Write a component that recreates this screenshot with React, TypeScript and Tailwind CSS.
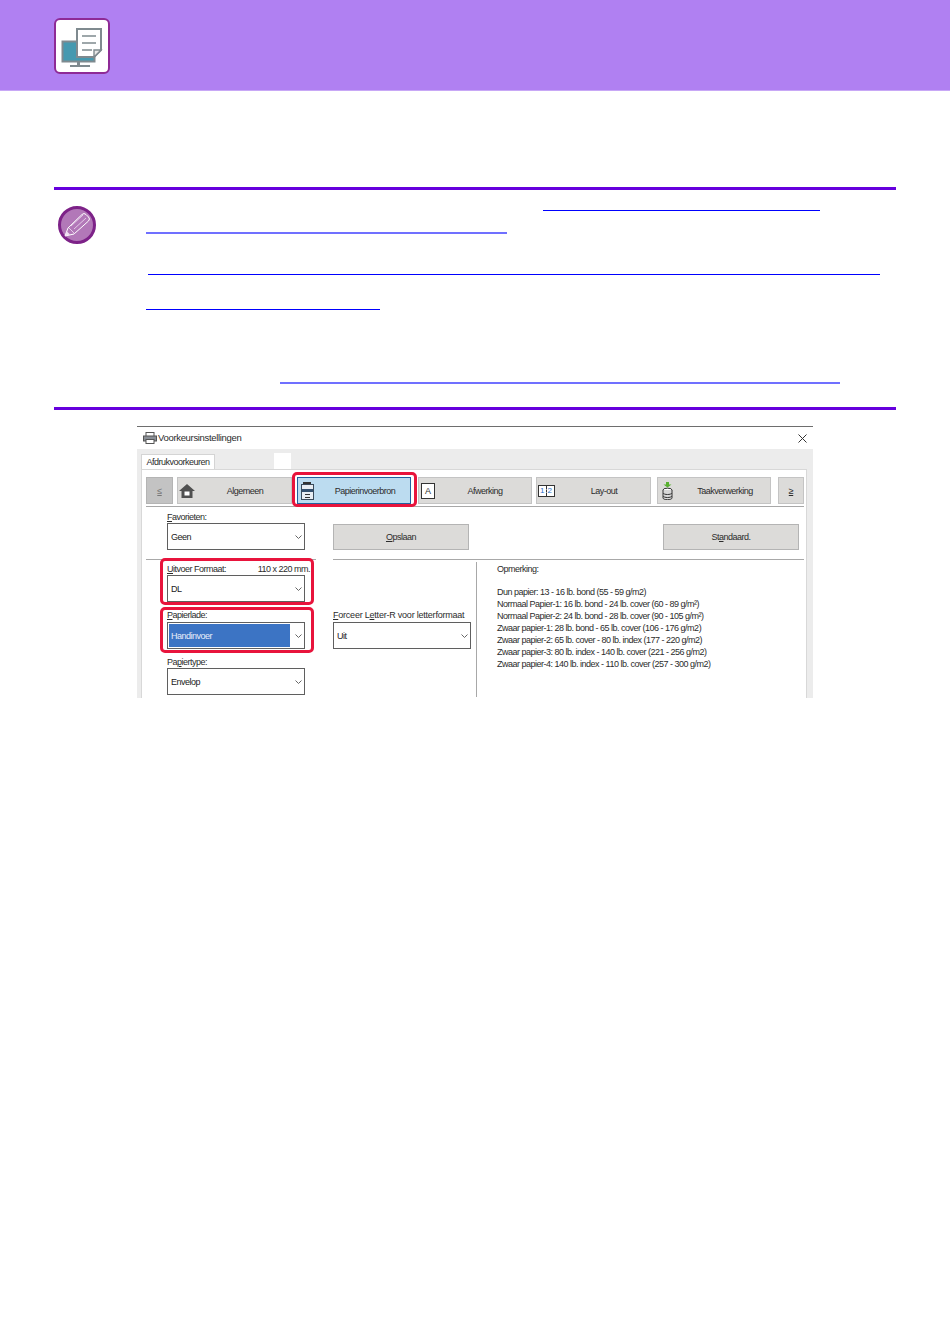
const font = "[font-family:'Liberation_Sans',Arial,sans-serif]";

function HeaderIcon() {
  return (
    <div className="w-[56px] h-[56px] bg-white border-2 border-[#8e2a96] rounded-[6px] flex items-center justify-center">
      <svg width="52" height="52" viewBox="0 0 52 52">
        <rect x="6.500" y="21.500" width="32" height="20" fill="#4599b0" stroke="#7f8a8f" strokeWidth="2" />
        <rect x="21" y="42" width="3" height="4" fill="#7f8a8f" />
        <rect x="14" y="45" width="20" height="2" fill="#7f8a8f" />
        <path d="M21 9h24v21l-7 7H21z" fill="#fff" stroke="#7f8a8f" strokeWidth="2" />
        <path d="M26 16h14M26 23h14M26 30h10" stroke="#7f8a8f" strokeWidth="1.600" />
        <path d="M38 37v-7h7z" fill="#e8e8e8" stroke="#7f8a8f" strokeWidth="1.400" />
      </svg>
    </div>
  );
}

function NoteIcon() {
  return (
    <svg width="40" height="40" viewBox="0 0 40 40" className="block">
      <circle cx="20" cy="20" r="17.500" fill="#b278b8" stroke="#7d2288" strokeWidth="3" />
      <path d="M8 31l3-8L25 9.500q2-2 4 0l2.500 2.500q2 2 0 4L17 29z" fill="none" stroke="#fff" strokeWidth="1" />
      <path d="M12 23l6 6M14 21L26 10M17 24L29 13" fill="none" stroke="#f0dff2" strokeWidth="0.800" />
      <path d="M8 31l1.500-5 3.500 3.500z" fill="#f0dff2" />
    </svg>
  );
}

function Select({ value, selected, width = "w-[138px]" }: { value: string; selected?: boolean; width?: string }) {
  return (
    <div className={`${width} h-[27px] bg-white border border-[#5f5f5f] flex items-center p-[1px]`}>
      <div className={selected ? "w-[121px] h-[23px] bg-[#3c74c4] text-[#e8eefa] flex items-center pl-[2px]" : "flex-1 pl-[2px] text-[#222]"}>
        {value}
      </div>
      <svg width="7" height="4" viewBox="0 0 7 4" className="ml-auto mr-[1px] shrink-0">
        <path d="M.5.500L3.500 3.500 6.500.500" fill="none" stroke="#666" strokeWidth="1" />
      </svg>
    </div>
  );
}

function ToolButton({ label, icon, className, active, textClass }: { label: string; icon?: React.ReactNode; className: string; active?: boolean; textClass?: string }) {
  return (
    <div className={`${className} h-[27px] shrink-0 flex items-center ${active ? "bg-[#bcdcf0] border border-[#22609f]" : "bg-[#dcdbd9] border border-[#c4c4c4]"}`}>
      <span className="w-[18px] shrink-0 flex justify-center">{icon}</span>
      <span className={`flex-1 text-center text-[#2c2c2c] ${textClass ?? ""}`}>{label}</span>
    </div>
  );
}

const notes = [
  "Dun papier: 13 - 16 lb. bond (55 - 59 g/m2)",
  "Normaal Papier-1: 16 lb. bond - 24 lb. cover (60 - 89 g/m²)",
  "Normaal Papier-2: 24 lb. bond - 28 lb. cover (90 - 105 g/m²)",
  "Zwaar papier-1: 28 lb. bond - 65 lb. cover (106 - 176 g/m2)",
  "Zwaar papier-2: 65 lb. cover - 80 lb. index (177 - 220 g/m2)",
  "Zwaar papier-3: 80 lb. index - 140 lb. cover (221 - 256 g/m2)",
  "Zwaar papier-4: 140 lb. index - 110 lb. cover (257 - 300 g/m2)",
];

function Dialog() {
  return (
    <div className={`relative ml-[83px] mt-[16px] w-[676px] h-[272px] overflow-hidden border-t border-[#6e6e6e] text-[9px] tracking-[-0.5px] leading-[12px] text-[#2c2c2c] ${font}`}>
      <div className="h-[22px] bg-white flex items-center px-[6px]">
        <svg width="14" height="12" viewBox="0 0 14 12" className="mr-[1px]">
          <rect x="3" y="0.500" width="8" height="4" fill="#fff" stroke="#555" />
          <rect x="0.500" y="4" width="13" height="5" fill="#8a8f96" stroke="#555" />
          <rect x="3" y="7.500" width="8" height="4" fill="#fff" stroke="#555" />
        </svg>
        <span className="text-[9.5px] tracking-[-0.33px]">Voorkeursinstellingen</span>
        <svg width="9" height="9" viewBox="0 0 9 9" className="ml-auto">
          <path d="M.5.500l8 8M8.500.500l-8 8" stroke="#333" strokeWidth="1" />
        </svg>
      </div>

      <div className="bg-[#ececec] pl-[4px] pr-[6px]">
        <div className="h-[20px] flex items-end">
          <div className="w-[74px] h-[15px] bg-white border border-b-0 border-[#d4d4d4] flex items-center justify-center">Afdrukvoorkeuren</div>
          <div className="ml-[59px] w-[17px] h-[16px] bg-white" />
        </div>

        <div className="bg-white border border-[#d8d8d8] h-[230px] pl-[4px] pr-[2px]">
          <div className="flex pt-[7px]">
            <div className="w-[27px] h-[27px] shrink-0 bg-[#c3c3c3] border border-[#b4b4b4] flex items-center justify-center text-[#777] underline">≤</div>
            <ToolButton
              className="w-[115px] ml-[4px]"
              label="Algemeen"
              textClass="pl-[3px]"
              icon={
                <svg width="16" height="16" viewBox="0 0 16 16">
                  <path d="M8 1L0 8h2.500v7h11V8H16z" fill="#505050" />
                  <rect x="5.500" y="8.500" width="5" height="4" fill="#fff" />
                </svg>
              }
            />
            <ToolButton
              className="w-[114px] ml-[5px]"
              label="Papierinvoerbron"
              active
              textClass="pl-[4px]"
              icon={
                <svg width="13" height="18" viewBox="0 0 13 18">
                  <rect x="2" y="0" width="8" height="2" fill="#333" />
                  <rect x="0.500" y="2.500" width="12" height="15" fill="#e8edf2" stroke="#3a4a5a" />
                  <rect x="1" y="7" width="11" height="3" fill="#33506e" />
                  <rect x="4" y="12" width="5" height="1" fill="#333" />
                  <rect x="4" y="15" width="5" height="1" fill="#333" />
                </svg>
              }
            />
            <ToolButton
              className="w-[114px] ml-[7px]"
              label="Afwerking"
              textClass="pl-[2px]"
              icon={
                <span className="w-[14px] h-[16px] border border-[#333] bg-white flex items-center justify-center text-[9px] tracking-normal">A</span>
              }
            />
            <ToolButton
              className="w-[115px] ml-[4px]"
              label="Lay-out"
              textClass="pl-[3px]"
              icon={
                <span className="w-[17px] h-[12px] border border-[#333] bg-white flex items-center justify-center text-[8px] leading-[10px] tracking-normal text-[#2a70c8]">
                  <span className="pr-[1px]">1</span>
                  <span className="h-full border-l border-dashed border-[#333]" />
                  <span className="pl-[1px]">2</span>
                </span>
              }
            />
            <ToolButton
              className="w-[114px] ml-[6px]"
              label="Taakverwerking"
              textClass="pl-[4px]"
              icon={
                <svg width="11" height="18" viewBox="0 0 11 18">
                  <path d="M5.500 5.500L1.500 2.500h2.500V0h3v2.500h2.500z" fill="#58b030" />
                  <ellipse cx="5.500" cy="8" rx="4.500" ry="1.800" fill="#fff" stroke="#333" />
                  <path d="M1 8v8c0 1 2 1.700 4.500 1.700S10 17 10 16V8" fill="#d8d8d8" stroke="#333" />
                  <path d="M1 11c1 2 8 2 9 0M1 14c1 2 8 2 9 0" fill="none" stroke="#333" />
                </svg>
              }
            />
            <div className="w-[26px] h-[27px] ml-[7px] shrink-0 bg-[#dcdbd9] border border-[#c4c4c4] flex items-center justify-center underline">≥</div>
          </div>
          <div className="mt-[2px] h-[1px] bg-[#a8a8a8]" />

          <div className="flex pl-[21px] pt-[5px]">
            <div className="w-[138px]">
              <div className="h-[11px] leading-[11px]"><u>F</u>avorieten:</div>
              <Select value="Geen" />
            </div>
            <div className="w-[136px] h-[26px] mt-[12px] ml-[28px] bg-[#dcdbd9] border border-[#b4b4b4] flex items-center justify-center"><span><u>O</u>pslaan</span></div>
            <div className="w-[136px] h-[26px] mt-[12px] ml-[194px] bg-[#dcdbd9] border border-[#b4b4b4] flex items-center justify-center"><span>St<u>a</u>ndaard.</span></div>
          </div>

          <div className="mt-[9px] flex">
            <div className="w-[170px] h-[1px] bg-[#a8a8a8]" />
            <div className="ml-[17px] flex-1 h-[1px] bg-[#a8a8a8]" />
          </div>

          <div className="flex">
            <div className="w-[187px] pl-[21px] pt-[3px]">
              <div className="w-[143px] flex justify-between h-[12px] whitespace-nowrap"><span><u>U</u>itvoer Formaat:</span><span>110 x 220 mm.</span></div>
              <Select value="DL" />
              <div className="mt-[7px] h-[13px]"><u>P</u>apierlade:</div>
              <Select value="Handinvoer" selected />
              <div className="mt-[7px] h-[12px]">Pa<u>p</u>iertype:</div>
              <Select value="Envelop" />
            </div>

            <div className="w-[144px] pt-[49px]">
              <div className="h-[13px] whitespace-nowrap tracking-[-0.22px]"><u>F</u>orceer L<u>e</u>tter-R voor letterformaat</div>
              <Select value="Uit" />
            </div>

            <div className="ml-[-1px] mt-[2px] w-[1px] bg-[#a8a8a8] h-[135px]" />

            <div className="pl-[20px] pt-[3px]">
              <div className="h-[12px]">Opmerking:</div>
              <div className="mt-[11px]">
                {notes.map((line) => (
                  <div key={line} className="h-[12px] whitespace-nowrap">{line}</div>
                ))}
              </div>
            </div>
          </div>
        </div>
      </div>

      <div className="absolute left-[155px] top-[45px] w-[125px] h-[35px] border-[3px] border-[#e8143c] rounded-[5px]" />
      <div className="absolute left-[23px] top-[131px] w-[154px] h-[47px] border-[3px] border-[#e8143c] rounded-[5px]" />
      <div className="absolute left-[23px] top-[180px] w-[154px] h-[46px] border-[3px] border-[#e8143c] rounded-[5px]" />
    </div>
  );
}

export default function App() {
  return (
    <div className="min-h-[1344px] bg-white">
      <header className="h-[91px] bg-[#b080f2] border-b border-[#c8a8f6] pl-[54px] pt-[18px]">
        <HeaderIcon />
      </header>

      <main className="px-[54px] pt-[96px]">
        <section className="h-[223px] border-y-[3px] border-[#6600dd] flex">
          <div className="w-[92px] shrink-0 pl-[3px] pt-[15px]">
            <NoteIcon />
          </div>
          <div className="flex-1">
            <div className="ml-[397px] mt-[20px] w-[277px] h-[1px] bg-[#0000ff]" />
            <div className="mt-[21px] w-[361px] h-[2px] bg-[#7070ff]" />
            <div className="ml-[2px] mt-[40px] w-[732px] h-[1px] bg-[#0000ff]" />
            <div className="mt-[34px] w-[234px] h-[1px] bg-[#0000ff]" />
            <div className="ml-[134px] mt-[72px] w-[560px] h-[2px] bg-[#7070ff]" />
          </div>
        </section>

        <Dialog />
      </main>
    </div>
  );
}
